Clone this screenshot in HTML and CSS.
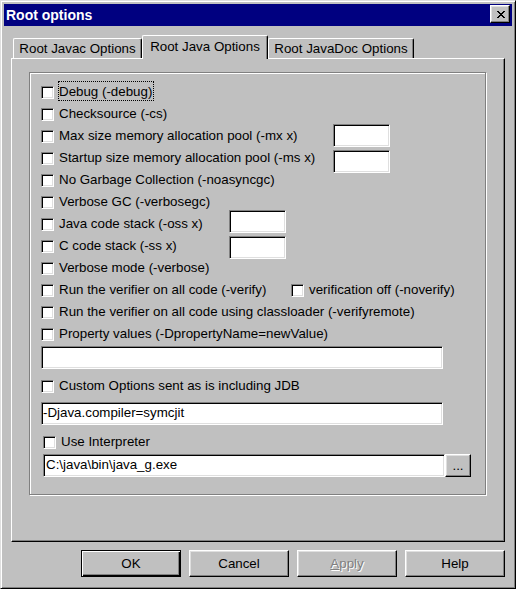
FILE: index.html
```html
<!DOCTYPE html>
<html>
<head>
<meta charset="utf-8">
<title>Root options</title>
<link rel="stylesheet" href="styles.css">
</head>
<body>
<div class="dialog">
  <div class="titlebar">
    <span class="title">Root options</span>
    <div class="close">
      <svg width="8" height="7" viewBox="0 0 8 7"><path fill="#000" d="M0 0h2v1H0zM6 0h2v1H6zM1 1h2v1H1zM5 1h2v1H5zM2 2h4v1H2zM3 3h2v1H3zM2 4h4v1H2zM1 5h2v1H1zM5 5h2v1H5zM0 6h2v1H0zM6 6h2v1H6z"/></svg>
    </div>
  </div>
  <div class="tabs">
    <div class="tab t1">Root Javac Options</div>
    <div class="tab t2 active">Root Java Options</div>
    <div class="tab t3">Root JavaDoc Options</div>
  </div>
  <div class="panel">
    <div class="group">
      <div class="row"><span class="cb"></span><span class="lbl"><span class="focus">Debug (-debug)</span></span></div>
      <div class="row"><span class="cb"></span><span class="lbl">Checksource (-cs)</span></div>
      <div class="row"><span class="cb"></span><span class="lbl w274">Max size memory allocation pool (-mx x)</span><span class="field small up1"></span></div>
      <div class="row"><span class="cb"></span><span class="lbl w274">Startup size memory allocation pool (-ms x)</span><span class="field small dn3"></span></div>
      <div class="row"><span class="cb"></span><span class="lbl">No Garbage Collection (-noasyncgc)</span></div>
      <div class="row"><span class="cb"></span><span class="lbl">Verbose GC (-verbosegc)</span></div>
      <div class="row"><span class="cb"></span><span class="lbl w170">Java code stack (-oss x)</span><span class="field small up3"></span></div>
      <div class="row"><span class="cb"></span><span class="lbl w170">C code stack (-ss x)</span><span class="field small dn1"></span></div>
      <div class="row"><span class="cb"></span><span class="lbl">Verbose mode (-verbose)</span></div>
      <div class="row"><span class="cb"></span><span class="lbl w232">Run the verifier on all code (-verify)</span><span class="cb"></span><span class="lbl">verification off (-noverify)</span></div>
      <div class="row"><span class="cb"></span><span class="lbl">Run the verifier on all code using classloader (-verifyremote)</span></div>
      <div class="row"><span class="cb"></span><span class="lbl">Property values (-DpropertyName=newValue)</span></div>
      <div class="field wide gap1"></div>
      <div class="row gap6"><span class="cb"></span><span class="lbl">Custom Options sent as is including JDB</span></div>
      <div class="field wide gap5">-Djava.compiler=symcjit</div>
      <div class="row gap6 indent"><span class="cb"></span><span class="lbl">Use Interpreter</span></div>
      <div class="pathrow gap1">
        <div class="field path">C:\java\bin\java_g.exe</div>
        <div class="btn browse">...</div>
      </div>
    </div>
  </div>
  <div class="buttons">
    <div class="btn default">OK</div>
    <div class="btn">Cancel</div>
    <div class="btn disabled"><u>A</u>pply</div>
    <div class="btn">Help</div>
  </div>
</div>
</body>
</html>
```

FILE: styles.css
```css
* { box-sizing: border-box; }
html, body { margin: 0; padding: 0; }
body {
  font: 13.33px "Liberation Sans", Arial, sans-serif;
  color: #000;
  background: #c0c0c0;
}
.dialog {
  width: 516px;
  height: 589px;
  background: #c0c0c0;
  border: 1px solid;
  border-color: #dfdfdf #000 #000 #dfdfdf;
  box-shadow: inset 1px 1px #fff, inset -1px -1px #808080;
  padding: 3px;
  display: flex;
  flex-direction: column;
}
.titlebar {
  height: 22px;
  flex: none;
  background: #000080;
  color: #fff;
  display: flex;
  align-items: center;
  justify-content: space-between;
  padding: 0 2px;
}
.title { font-weight: bold; font-size: 14px; }
.close {
  width: 20px;
  height: 18px;
  margin-top: -2px;
  background: #c0c0c0;
  border: 1px solid;
  border-color: #fff #000 #000 #fff;
  box-shadow: inset -1px -1px #808080, inset 1px 1px #dfdfdf;
  display: flex;
  align-items: center;
  justify-content: center;
  padding-left: 1px;
}
.close svg { display: block; }
.tabs {
  flex: none;
  height: 23px;
  margin-top: 9px;
  padding-left: 9px;
  display: flex;
  align-items: flex-end;
}
.tab {
  height: 20px;
  line-height: 19px;
  text-align: center;
  background: #c0c0c0;
  border: 1px solid;
  border-bottom: 0;
  border-color: #fff #000 #000 #fff;
  border-radius: 2px 2px 0 0;
  box-shadow: inset -1px 0 #808080;
  white-space: nowrap;
}
.t1 { width: 129px; }
.t2 { width: 126px; }
.t3 { width: 146px; }
.tab.active {
  height: 24px;
  margin-bottom: -1px;
  padding-top: 1px;
  position: relative;
  z-index: 1;
}
.panel {
  flex: none;
  height: 484px;
  margin: 0 7px;
  border: 1px solid;
  border-color: #fff #000 #000 #fff;
  box-shadow: inset -1px -1px #808080;
  padding: 13px 0 0 17px;
}
.group {
  width: 457px;
  height: 423px;
  border: 1px solid #808080;
  box-shadow: inset 1px 1px #fff, 1px 1px #fff;
  padding: 8px 0 0 11px;
}
.row {
  display: flex;
  align-items: flex-start;
  height: 22px;
  line-height: 22px;
  white-space: nowrap;
}
.cb {
  flex: none;
  width: 13px;
  height: 13px;
  margin: 5px 5px 0 0;
  background: #fff;
  border: 1px solid;
  border-color: #808080 #fff #fff #808080;
  box-shadow: inset 1px 1px #000, inset -1px -1px #dfdfdf;
}
.lbl { flex: none; }
.w274 { width: 274px; }
.w170 { width: 170px; }
.w232 { width: 232px; }
.focus { outline: 1px dotted #000; outline-offset: 0; padding: 2px 1px 1px 0; }
.field {
  flex: none;
  display: block;
  height: 23px;
  line-height: 19px;
  padding-left: 1px;
  background: #fff;
  border: 1px solid;
  border-color: #808080 #fff #fff #808080;
  box-shadow: inset 1px 1px #000, inset -1px -1px #dfdfdf;
  white-space: nowrap;
}
.small { width: 57px; }
.up1 { margin-top: -1px; }
.up3 { margin-top: -3px; }
.dn1 { margin-top: 1px; }
.dn3 { margin-top: 3px; }
.wide { width: 402px; }
.gap1 { margin-top: 1px; }
.gap5 { margin-top: 5px; }
.gap6 { margin-top: 6px; }
.indent { padding-left: 2px; }
.pathrow { display: flex; padding-left: 2px; }
.path { width: 402px; padding-left: 2px; }
.btn {
  width: 100px;
  height: 27px;
  line-height: 25px;
  text-align: center;
  background: #c0c0c0;
  border: 1px solid;
  border-color: #fff #000 #000 #fff;
  box-shadow: inset -1px -1px #808080, inset 1px 1px #dfdfdf;
}
.browse {
  width: 26px;
  height: 23px;
  line-height: 21px;
}
.buttons {
  flex: none;
  display: flex;
  justify-content: flex-end;
  gap: 8px;
  margin-top: 8px;
  padding-right: 7px;
}
.btn.default {
  border-color: #000;
  box-shadow: inset 1px 1px #fff, inset -1px -1px #000, inset -2px -2px #808080;
}
.btn.disabled {
  color: #808080;
  text-shadow: 1px 1px #fff;
}
.btn.disabled u { text-decoration: underline; }
```
